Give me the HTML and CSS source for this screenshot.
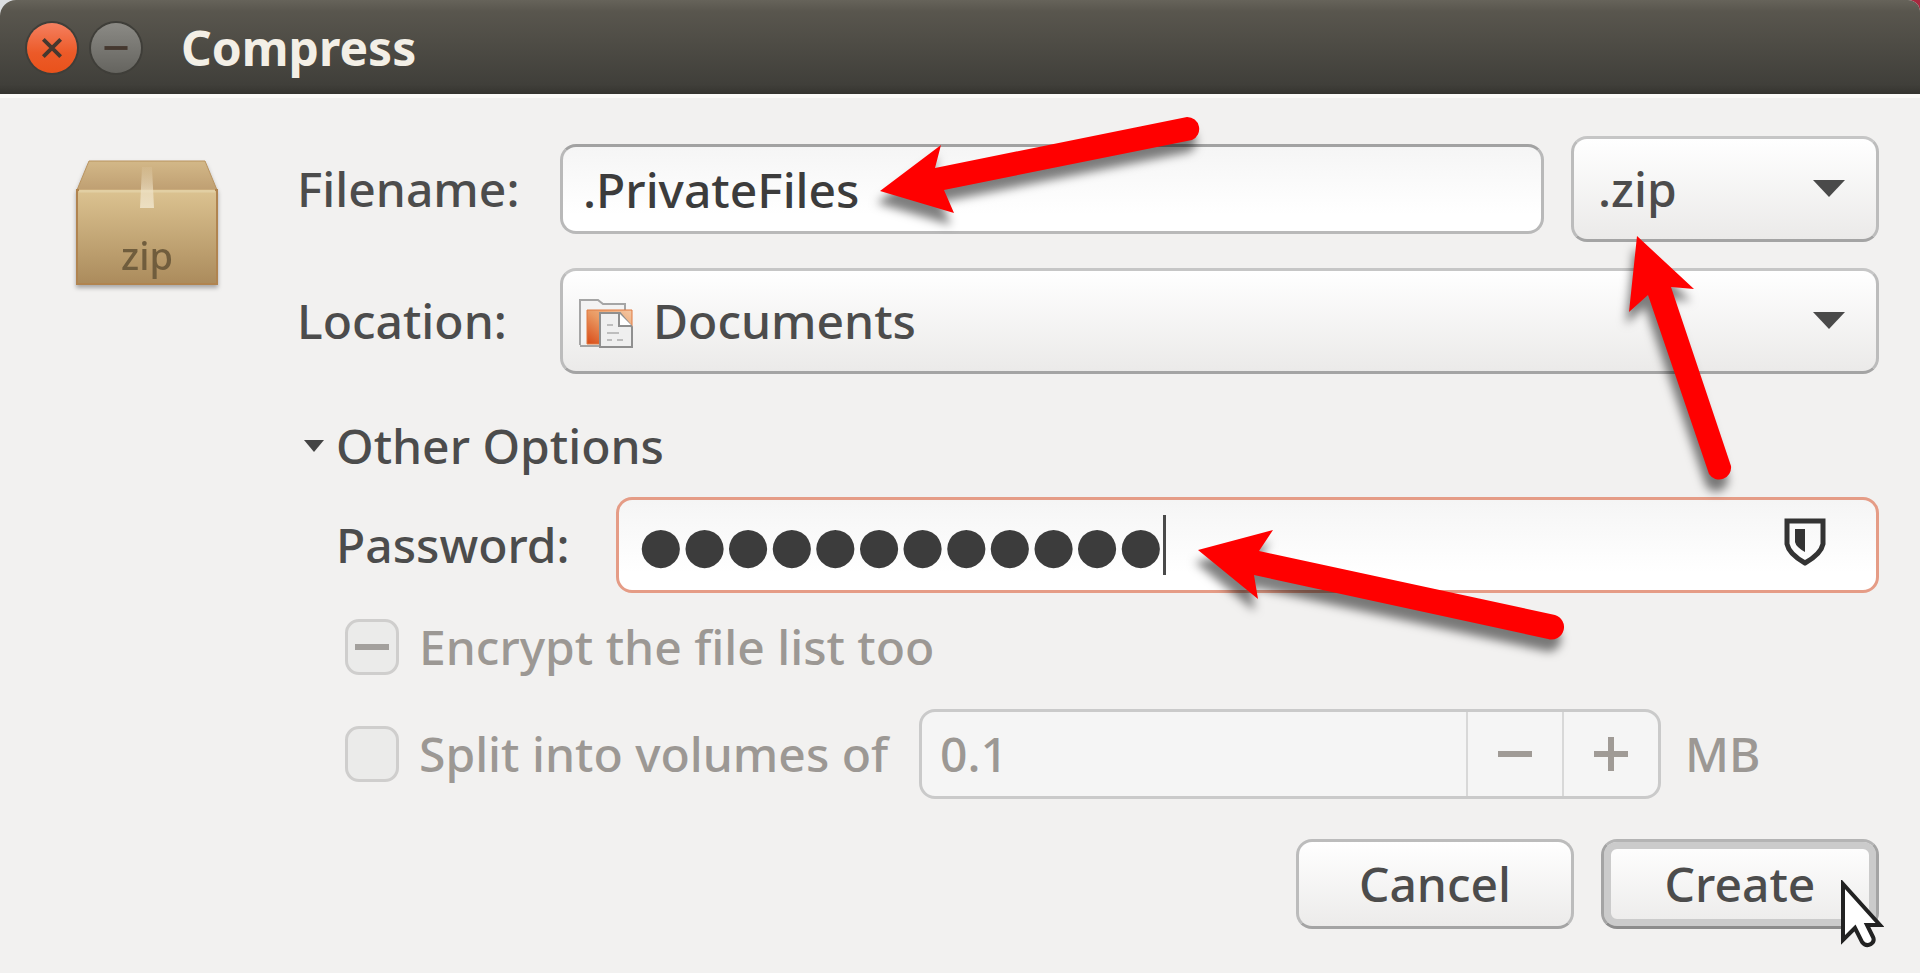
FILE: index.html
```
<!DOCTYPE html>
<html lang="en">
<head>
    <meta charset="UTF-8">
    <meta name="viewport" content="width=device-width, initial-scale=1.0">
    <title>Compress</title>
    <link rel="stylesheet" href="styles.css">
</head>
<body>
    <div class="dialog">
        <header class="titlebar">
            <button class="win-btn close" type="button" aria-label="Close">
                <svg viewBox="0 0 52 52"><path d="M17 17 L35 35 M35 17 L17 35"/></svg>
            </button>
            <button class="win-btn minimize" type="button" aria-label="Minimize">
                <svg viewBox="0 0 52 52"><path d="M14 26 H38"/></svg>
            </button>
            <h1>Compress</h1>
        </header>

        <form class="content">
            <svg class="package" viewBox="0 0 144 132">
                <defs>
                    <linearGradient id="front" x1="0" y1="0" x2="0" y2="1">
                        <stop offset="0" stop-color="#dcc391"/>
                        <stop offset="1" stop-color="#ab8b5c"/>
                    </linearGradient>
                    <linearGradient id="lid" x1="0" y1="0" x2="0" y2="1">
                        <stop offset="0" stop-color="#d3b888"/>
                        <stop offset="1" stop-color="#bf9f72"/>
                    </linearGradient>
                    <linearGradient id="tape" x1="0" y1="0" x2="0" y2="1">
                        <stop offset="0" stop-color="#efe3c8" stop-opacity="0.1"/>
                        <stop offset="0.6" stop-color="#efe3c8" stop-opacity="0.7"/>
                        <stop offset="1" stop-color="#efe3c8" stop-opacity="0.9"/>
                    </linearGradient>
                </defs>
                <path d="M14 1 H130 L142 30 H2 Z" fill="url(#lid)" stroke="#b8935f"/>
                <path d="M2 30 H142 V124 H2 Z" fill="url(#front)" stroke="#b08450" stroke-width="2"/>
                <path d="M4 31 H140" stroke="#e2cfa3" stroke-width="3"/>
                <path d="M67 7 H77 L79 48 H65 Z" fill="url(#tape)"/>
                <text x="72" y="110" text-anchor="middle">zip</text>
            </svg>

            <div class="form">
                <div class="row">
                    <label for="filename">Filename:</label>
                    <div class="field">
                        <input id="filename" class="entry" type="text" value=".PrivateFiles" spellcheck="false">
                        <svg class="arrow arrow-filename" viewBox="0 0 330 110">
                            <path d="M5 81 L66 35 L60 58 L312 7 A12 12 0 0 1 317 30 L69 80 L79 103 Z"/>
                        </svg>
                    </div>
                    <div class="combo combo-ext">
                        <select aria-label="Archive type">
                            <option>.zip</option>
                        </select>
                        <svg class="caret" viewBox="0 0 32 17"><path d="M0 0 H32 L16 17 Z"/></svg>
                        <svg class="arrow arrow-ext" viewBox="0 0 120 250">
                            <path d="M13 0 L70 53 L47 51 L107 230 A12 12 0 0 1 85 238 L24 59 L5 76 Z"/>
                        </svg>
                    </div>
                </div>

                <div class="row">
                    <label for="location">Location:</label>
                    <div class="combo combo-location">
                        <svg class="folder" viewBox="0 0 54 50">
                            <defs>
                                <linearGradient id="orange" x1="1" y1="0" x2="0" y2="1">
                                    <stop offset="0" stop-color="#f3c8a6"/>
                                    <stop offset="0.5" stop-color="#ea9a63"/>
                                    <stop offset="1" stop-color="#d84a17"/>
                                </linearGradient>
                            </defs>
                            <path d="M1 47 V2 H19 L24 6 H46 V14" fill="#f3f3f3" stroke="#a5a5a5" stroke-width="2"/>
                            <path d="M8 12 H53 V46 H8 Z" fill="url(#orange)" stroke="#e0793e"/>
                            <path d="M1 48 H20" stroke="#a5a5a5" stroke-width="2"/>
                            <path d="M21 15 H41 L53 29 V49 H21 Z" fill="#efefef" stroke="#8f8f8f" stroke-width="2"/>
                            <path d="M40 15 V28 H53" fill="#fff" stroke="#8f8f8f" stroke-width="2"/>
                            <path d="M28 27 H34 M28 35 H40 M28 42 H33 M38 42 H44" stroke="#bdbdbd" stroke-width="2"/>
                        </svg>
                        <select id="location">
                            <option>Documents</option>
                        </select>
                        <svg class="caret" viewBox="0 0 32 17"><path d="M0 0 H32 L16 17 Z"/></svg>
                    </div>
                </div>

                <details open>
                    <summary>
                        <svg class="expander" viewBox="0 0 20 12"><path d="M0 0 H20 L10 12 Z"/></svg>
                        <span>Other Options</span>
                    </summary>

                    <div class="options">
                        <div class="row password-row">
                            <label for="password">Password:</label>
                            <div class="field">
                                <input id="password" class="entry focused" type="text" value="●●●●●●●●●●●●" autocomplete="off">
                                <span class="text-cursor"></span>
                                <svg class="shield" viewBox="0 0 42 48">
                                    <path d="M3 3 H39 V26 Q37 36 21 45 Q5 36 3 26 Z" fill="none" stroke="#333" stroke-width="5"/>
                                    <path d="M11 11 H21 V34 Q12 29 11 24 Z" fill="#333"/>
                                </svg>
                                <svg class="arrow arrow-password" viewBox="0 0 380 130">
                                    <path d="M3 30 L78 10 L64 31 L360 95 A12 12 0 0 1 353 119 L59 55 L63 79 Z"/>
                                </svg>
                            </div>
                        </div>

                        <div class="check-row">
                            <input id="encrypt" class="mixed" type="checkbox" disabled>
                            <label for="encrypt">Encrypt the file list too</label>
                        </div>

                        <div class="check-row volumes">
                            <input id="split" type="checkbox" disabled>
                            <label for="split">Split into volumes of</label>
                            <div class="spin">
                                <input type="number" value="0.1" step="0.1" aria-label="Volume size" disabled>
                                <button type="button" aria-label="Decrease" disabled>
                                    <svg viewBox="0 0 34 34"><path d="M0 17 H34"/></svg>
                                </button>
                                <button type="button" aria-label="Increase" disabled>
                                    <svg viewBox="0 0 34 34"><path d="M0 17 H34 M17 0 V34"/></svg>
                                </button>
                            </div>
                            <span class="unit">MB</span>
                        </div>
                    </div>
                </details>
            </div>
        </form>

        <footer class="actions">
            <button class="action" type="button">Cancel</button>
            <button class="action default" type="button">Create
                <svg class="pointer" viewBox="0 0 44 68">
                    <path d="M3 4 V60 L15 48 L22 62 Q26 67 31 64 Q35 61 33 57 L27 45 H40 Z"/>
                </svg>
            </button>
        </footer>
    </div>
</body>
</html>
```

FILE: styles.css
```
* {
    box-sizing: border-box;
}
body {
    margin: 0;
    background: linear-gradient(90deg, #dcdfe2 50%, #a8283f 50%);
    color: #4c4c4c;
    font-family: "Noto Sans", "Open Sans", sans-serif;
    font-size: 48px;
    font-weight: 500;
    line-height: 60px;
}
input, select, button {
    font: inherit;
    color: inherit;
    margin: 0;
}
svg {
    display: block;
}
.dialog {
    min-height: 100vh;
    background: #f2f1f0;
    border-radius: 16px 12px 0 0;
}

/* title bar */
.titlebar {
    display: flex;
    align-items: center;
    gap: 14px;
    height: 94px;
    padding: 2px 27px 0;
    background: linear-gradient(#66635a, #59564e 12%, #403f3a 90%, #35342f);
    border-radius: 16px 12px 0 0;
    box-shadow: 0 4px 0 #fbfaf8;
}
.titlebar h1 {
    margin: 0 0 0 26px;
    font-size: 48px;
    font-weight: bold;
    color: #f3efe6;
}
.win-btn {
    width: 50px;
    height: 50px;
    padding: 0;
    border: 0;
    border-radius: 50%;
    box-shadow: 0 0 0 2px #3f3e39;
}
.win-btn path {
    fill: none;
    stroke: #45382f;
    stroke-width: 4;
}
.close {
    background: linear-gradient(#f58060, #ec5a28 60%, #e9521b);
}
.minimize {
    background: linear-gradient(#8b8a85, #65645f);
}

/* form */
.content {
    display: flex;
    gap: 78px;
    padding: 42px 41px 0 75px;
}
.package {
    flex: none;
    width: 144px;
    height: 132px;
    margin-top: 24px;
    filter: drop-shadow(0 3px 2px rgba(0, 0, 0, 0.3));
}
.package text {
    font-size: 38px;
    font-weight: 500;
    fill: #705d3d;
}
.form {
    flex: 1;
    min-width: 0;
}
.row {
    display: flex;
    align-items: center;
    margin-bottom: 26px;
}
.row > label {
    flex: none;
    width: 263px;
}
.field, .combo {
    position: relative;
}
.field, .combo-location {
    flex: 1;
}
.entry {
    display: block;
    width: 100%;
    height: 90px;
    padding: 0 20px;
    border: 3px solid #b9b9b9;
    border-top-color: #a2a2a2;
    border-radius: 16px;
    outline: 0;
    background: linear-gradient(#f5f5f5, #fff 80%);
    color: #3c3c3c;
}
.combo select {
    display: block;
    width: 100%;
    height: 106px;
    padding: 0 24px;
    border: 3px solid #bcbcbc;
    border-top-color: #c6c6c6;
    border-bottom-color: #a4a4a4;
    border-radius: 16px;
    background: linear-gradient(#fff, #ebeae9);
    appearance: none;
}
.combo .caret {
    position: absolute;
    right: 34px;
    top: 44px;
    width: 32px;
    height: 17px;
    fill: #4a4a4a;
    pointer-events: none;
}
.combo-ext {
    width: 308px;
    margin-left: 27px;
}
.combo-location select {
    padding-left: 90px;
}
.folder {
    position: absolute;
    left: 19px;
    top: 30px;
    width: 54px;
    height: 50px;
}

/* expander */
details {
    margin-top: 42px;
}
summary {
    display: flex;
    align-items: center;
    gap: 12px;
    padding-left: 7px;
    margin-bottom: 21px;
    list-style: none;
}
.expander {
    width: 20px;
    height: 12px;
    fill: #444;
}
.options {
    padding-left: 39px;
}
.password-row {
    margin-bottom: 24px;
}
.password-row > label {
    width: 280px;
}
.entry.focused {
    height: 96px;
    border-color: #e59c86;
    font-family: "DejaVu Sans", sans-serif;
    font-size: 50px;
}
.text-cursor {
    position: absolute;
    left: 547px;
    top: 18px;
    width: 3px;
    height: 60px;
    background: #4a4a4a;
}
.shield {
    position: absolute;
    right: 53px;
    top: 21px;
    width: 42px;
    height: 48px;
}
.check-row {
    display: flex;
    align-items: center;
    color: #9c9894;
}
.check-row input[type="checkbox"] {
    display: grid;
    place-items: center;
    width: 54px;
    height: 56px;
    margin: 0 20px 0 9px;
    border: 3px solid #cfcecd;
    border-radius: 14px;
    background: #ebebea;
    appearance: none;
}
.check-row .mixed::before {
    content: "";
    width: 34px;
    height: 6px;
    background: #a3a09d;
}
.volumes {
    margin-top: 32px;
}
.volumes label {
    flex: none;
    width: 500px;
    white-space: nowrap;
}
.spin {
    display: flex;
    width: 742px;
    height: 90px;
    margin-right: 24px;
    border: 3px solid #cacaca;
    border-radius: 16px;
    background: #f5f5f5;
}
.spin input {
    flex: 1;
    min-width: 0;
    padding: 0 18px;
    border: 0;
    background: none;
    appearance: textfield;
}
.spin input::-webkit-inner-spin-button {
    display: none;
}
.spin button {
    display: grid;
    place-items: center;
    width: 96px;
    padding: 0;
    border: 0;
    border-left: 2px solid #d8d8d8;
    background: none;
}
.spin svg {
    width: 34px;
    height: 34px;
    fill: none;
    stroke: #a09b96;
    stroke-width: 6;
}

/* buttons */
.actions {
    display: flex;
    justify-content: flex-end;
    gap: 27px;
    padding: 40px 41px 44px;
}
.action {
    position: relative;
    width: 278px;
    height: 90px;
    padding: 0;
    border: 3px solid #bcbcbc;
    border-bottom-color: #a4a4a4;
    border-radius: 16px;
    background: linear-gradient(#fff, #ecebea);
}
.action.default {
    border-color: #b4b4b4 #a4a4a4 #8c8c8c;
    box-shadow: inset 0 0 0 7px #cbcbcb;
}
.pointer {
    position: absolute;
    right: -8px;
    bottom: -22px;
    width: 44px;
    height: 68px;
    fill: #fff;
    stroke: #222;
    stroke-width: 4;
}

/* callout arrows */
.arrow {
    position: absolute;
    z-index: 1;
    overflow: visible;
    fill: #f00;
    filter: drop-shadow(-3px 12px 5px rgba(0, 0, 0, 0.5));
    pointer-events: none;
}
.arrow-filename {
    left: 315px;
    top: -34px;
    width: 330px;
    height: 110px;
}
.arrow-ext {
    left: 53px;
    top: 100px;
    width: 120px;
    height: 250px;
}
.arrow-password {
    left: 579px;
    top: 23px;
    width: 380px;
    height: 130px;
}
```
